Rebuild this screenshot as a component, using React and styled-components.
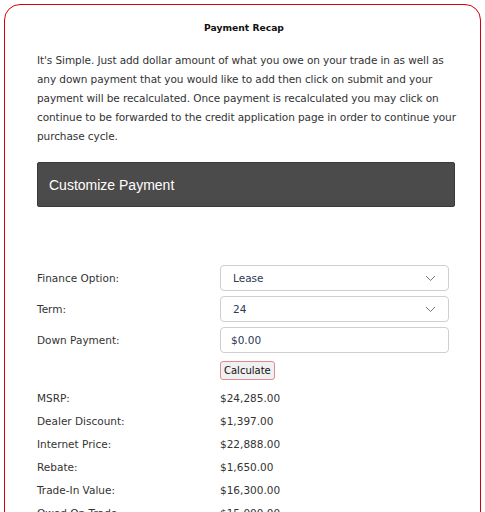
import React from 'react';
import styled, { createGlobalStyle } from 'styled-components';

const GlobalStyle = createGlobalStyle`
  body {
    margin: 0;
    background: #fff;
    font-family: "DejaVu Sans", Verdana, sans-serif;
  }
`;

const Card = styled.div`
  margin: 4px 4px 0 4px;
  border: 1px solid #d3000f;
  border-radius: 16px;
  padding: 15px 29px 40px 32px;
  min-height: 600px;
  color: #333;
`;

const Title = styled.h3`
  margin: 0;
  text-align: center;
  font-size: 9.2px;
  font-weight: bold;
  color: #111;
  line-height: 16px;
`;

const Intro = styled.p`
  margin: 15px -14px 0 0;
  font-size: 10.5px;
  letter-spacing: -0.08px;
  line-height: 19px;
  white-space: nowrap;
  color: #333;
`;

const Panel = styled.div`
  margin: 16px 0 0 0;
  width: 418px;
  height: 45px;
  background: #4b4b4b;
  border: 1px solid #3a3a3a;
  border-radius: 2px;
  box-sizing: border-box;
  display: flex;
  align-items: center;
  padding-left: 11px;
  font-family: "Liberation Sans", Arial, sans-serif;
  font-size: 14px;
  color: #fff;
`;

const Form = styled.div`
  margin-top: 58px;
  display: flex;
  flex-direction: column;
  gap: 5px;
`;

const Row = styled.div`
  display: flex;
  align-items: center;
`;

const Label = styled.div`
  width: 183px;
  font-size: 10.5px;
  color: #333;
`;

const Field = styled.div`
  width: 229px;
  height: 26px;
  box-sizing: border-box;
  border: 1px solid #cfcfcf;
  border-radius: 4px;
  display: flex;
  align-items: center;
  justify-content: space-between;
  padding: 0 12px 0 ${p => (p.$input ? '10px' : '12px')};
  font-size: 10.5px;
  color: #2b3a55;
`;

const Chevron = () => (
  <svg width="11" height="7" viewBox="0 0 11 7">
    <path d="M1 1l4.5 4.5L10 1" fill="none" stroke="#777" strokeWidth="1" />
  </svg>
);

const ButtonRow = styled.div`
  padding-left: 183px;
  margin-top: 8px;
  display: flex;
`;

const Button = styled.button`
  font-family: "DejaVu Sans", Verdana, sans-serif;
  font-size: 10px;
  color: #111;
  background: #f0f0f0;
  border: 1px solid #e08a92;
  border-radius: 3px;
  height: 19px;
  padding: 0 3px;
`;

const Summary = styled.div`
  margin-top: 6px;
  display: flex;
  flex-direction: column;
`;

const SumRow = styled.div`
  display: flex;
  height: 23px;
  align-items: center;
  font-size: 10.5px;
  color: #333;
`;

const SumLabel = styled.div`
  width: 183px;
`;

const items = [
  ['MSRP:', '$24,285.00'],
  ['Dealer Discount:', '$1,397.00'],
  ['Internet Price:', '$22,888.00'],
  ['Rebate:', '$1,650.00'],
  ['Trade-In Value:', '$16,300.00'],
  ['Owed On Trade:', '$15,000.00'],
];

const App = () => {
  return (
    <>
      <GlobalStyle />
      <Card>
        <Title>Payment Recap</Title>
        <Intro>
          It's Simple. Just add dollar amount of what you owe on your trade in as well as<br />
          any down payment that you would like to add then click on submit and your<br />
          payment will be recalculated. Once payment is recalculated you may click on<br />
          continue to be forwarded to the credit application page in order to continue your<br />
          purchase cycle.
        </Intro>
        <Panel>Customize Payment</Panel>
        <Form>
          <Row>
            <Label>Finance Option:</Label>
            <Field>Lease<Chevron /></Field>
          </Row>
          <Row>
            <Label>Term:</Label>
            <Field>24<Chevron /></Field>
          </Row>
          <Row>
            <Label>Down Payment:</Label>
            <Field $input>$0.00</Field>
          </Row>
        </Form>
        <ButtonRow>
          <Button>Calculate</Button>
        </ButtonRow>
        <Summary>
          {items.map(([l, v]) => (
            <SumRow key={l}>
              <SumLabel>{l}</SumLabel>
              <div>{v}</div>
            </SumRow>
          ))}
        </Summary>
      </Card>
    </>
  );
};

export default App;
